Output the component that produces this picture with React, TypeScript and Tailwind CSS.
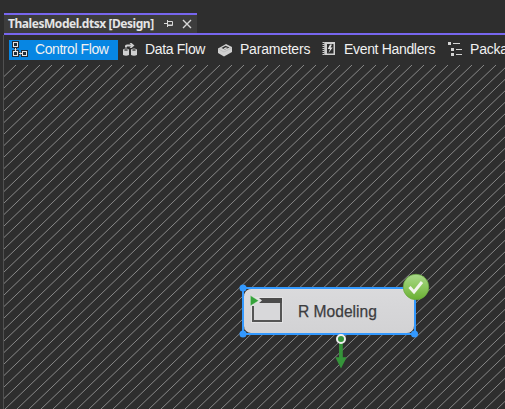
import React from 'react';

function Hatch() {
  const lines: React.ReactNode[] = [];
  for (let i = 0; i < 74; i++) {
    const x = 12 + i * 12;
    const y = 11.5 + i * 11.5;
    lines.push(<line key={i} x1={0} y1={y} x2={x} y2={0} />);
  }
  return (
    <svg className="absolute inset-0" width="501" height="344" stroke="#888888" strokeWidth="1">
      {lines}
    </svg>
  );
}

function ControlFlowIcon() {
  return (
    <svg width="16" height="16" viewBox="0 0 16 16" fill="none">
      <g fill="#1f2c38">
        <rect x="0" y="0" width="7" height="7" />
        <rect x="0" y="9" width="7" height="7" />
        <rect x="9" y="9" width="7" height="7" />
        <path d="M2 6h3v4H2zM6 11h4v3H6z" />
      </g>
      <g stroke="#e4e4e4">
        <rect x="1.5" y="1.5" width="4" height="4" />
        <rect x="1.5" y="10.5" width="4" height="4" />
        <rect x="10.5" y="10.5" width="4" height="4" />
        <path d="M3.5 7v3M2.5 8.5h2M7 12.5h3M8.5 11.5v2" />
      </g>
    </svg>
  );
}

function DataFlowIcon() {
  return (
    <svg width="16" height="16" viewBox="0 0 16 16" fill="#cfcfcf">
      <path d="M3 6.500V5Q3 3.500 5 3.500h4L7.500 2H9.500l3 2.500-3 2.500H7.500L9 5.500H5v1z" />
      <path d="M1 8.500Q4 6.500 7 8.500V14Q4 15.500 1 14zM9 8.500Q12 6.500 15 8.500V14Q12 15.500 9 14z" />
      <ellipse cx="4" cy="9" rx="2" ry=".7" fill="#3a3a3a" />
      <ellipse cx="12" cy="9" rx="2" ry=".7" fill="#3a3a3a" />
    </svg>
  );
}

function ParametersIcon() {
  return (
    <svg width="16" height="16" viewBox="0 0 16 16">
      <path d="M1 7.500l8-4.500 6 3v5l-8 4.500-6-3.500z" fill="#d0d0d0" />
      <path d="M1.500 8L7 11l7.500-4" stroke="#a8a8a8" strokeWidth=".5" fill="none" />
      <path d="M4.500 7l4-2.300 4 1.700L8 8.600z" fill="#2e2e2e" />
      <path d="M6.500 7.500l2.300-1.200 2 .7L8 8.500z" fill="#d0d0d0" />
    </svg>
  );
}

function EventIcon() {
  return (
    <svg width="14" height="14" viewBox="0 0 14 14">
      <path d="M3 0h10v13H3z" fill="#cfcfcf" />
      <path d="M5 2h6.500v9.500H5z" fill="#2e2e2e" />
      <path d="M8 2.500L5.700 7H8l-1.500 4 4.200-5.500H8.500L10 2.500z" fill="#e4e4e4" />
      <path d="M1.500 0v13" stroke="#cfcfcf" strokeWidth="2" strokeDasharray="1 1" />
      <path d="M2.800 0v13" stroke="#cfcfcf" strokeWidth="1" />
    </svg>
  );
}

function PackageIcon() {
  return (
    <svg width="14" height="14" viewBox="0 0 14 14" fill="#d4d4d4" shapeRendering="crispEdges">
      <path d="M0 0h3v3H0zM3 6h3v3H3zM3 11h3v3H3zM5 1h7v1H5zM8 7h6v1H8zM8 12h6v1H8z" />
    </svg>
  );
}

function Tab({ icon, label, className }: { icon: React.ReactNode; label: string; className: string }) {
  return (
    <div className={`flex h-5 shrink-0 items-center ${className}`}>
      <span className="flex w-4 shrink-0 justify-center pb-[2px]">{icon}</span>
      <span className="ml-[7px] whitespace-nowrap pb-px leading-[19px]">{label}</span>
    </div>
  );
}

function TaskNode() {
  return (
    <div className="absolute left-[238px] top-[222px] flex h-[48px] w-[174px] items-center border-2 border-[#3399ff]">
      <div className="flex h-full w-full items-center rounded-[7px] bg-gradient-to-b from-[#dadadc] to-[#d2d2d4] pl-[6px]">
        <svg width="34" height="32" viewBox="0 0 34 32" className="shrink-0">
          <path d="M1 2h32v26H1z" fill="#e2e2e3" />
          <path d="M4 8h26v18H4z" fill="#d8d8da" />
          <path d="M3 11v15h28V7" fill="none" stroke="#555555" strokeWidth="2" />
          <path d="M9 3h23v5H9l3-2.500z" fill="#4b4b4b" />
          <path d="M.3.300v10.700L8.800 5.700z" fill="#35a33b" stroke="#e6ece6" strokeWidth=".5" />
        </svg>
        <span className="ml-[14px] whitespace-nowrap pt-[2px] text-[15.600px] text-[#3d3d3f] [-webkit-text-stroke:0.25px_#3d3d3f]">R Modeling</span>
      </div>
    </div>
  );
}

function NodeAdorners() {
  return (
    <svg className="absolute inset-0" width="501" height="344">
      <defs>
        <linearGradient id="badge" x1="0" y1="0" x2="0" y2="1">
          <stop offset="0" stopColor="#a9d88a" />
          <stop offset=".5" stopColor="#8cc75e" />
          <stop offset="1" stopColor="#69ae32" />
        </linearGradient>
      </defs>
      <g fill="#3399ff">
        <circle cx="239" cy="223" r="3.500" />
        <circle cx="239" cy="269" r="3.500" />
        <circle cx="410.500" cy="269" r="3.500" />
      </g>
      <path d="M336.900 276v17" stroke="#35943a" strokeWidth="3.800" />
      <path d="M331.300 292.300h11.400L337 303.500z" fill="#35943a" />
      <circle cx="337" cy="274" r="4" fill="#35943a" stroke="#eeeeee" strokeWidth="2" />
      <circle cx="412" cy="222" r="12.800" fill="url(#badge)" stroke="#69a741" strokeWidth=".7" />
      <path d="M405.500 222l4.500 5 8-10" fill="none" stroke="#f1f4ed" strokeWidth="3" />
    </svg>
  );
}

export default function App() {
  return (
    <div className="flex h-[409px] w-[505px] flex-col overflow-hidden bg-[#2e2e2e] pt-[13px] font-['Liberation_Sans',Arial,sans-serif] text-[#f1f1f1]">
      <div className="ml-1 flex h-5 w-[193px] shrink-0 items-center border-t-2 border-[#7766ee] bg-[#3d3d3d] pl-1 font-['Noto_Sans','Open_Sans',sans-serif]">
        <span className="w-[146px] whitespace-nowrap text-[12px] font-bold tracking-[-0.450px] text-[#e5e5e5]">ThalesModel.dtsx [Design]</span>
        <svg className="ml-[10px] shrink-0" width="9" height="8" viewBox="0 0 9 8" fill="none" stroke="#d8d8d8">
          <path d="M0 3.500h3M3.500 0v7M4 1.500h4.500v4H4M4 5h4" />
        </svg>
        <svg className="ml-[9px] shrink-0" width="10" height="10" viewBox="0 0 10 10" stroke="#d8d8d8" strokeWidth="1.400">
          <path d="M1 1l8 8M9 1L1 9" />
        </svg>
      </div>
      <div className="ml-1 h-[2px] shrink-0 bg-[#7766ee]" />
      <div className="ml-[3px] flex min-h-0 flex-1 flex-col border-l border-[#505050]">
        <div className="flex h-[30px] shrink-0 items-start overflow-hidden pt-[5px] text-[14px]">
          <Tab className="ml-[5px] w-[109px] bg-[#0786e3] pl-[3px] tracking-[-0.430px]" icon={<ControlFlowIcon />} label="Control Flow" />
          <Tab className="w-[95px] pl-1 tracking-[-0.320px]" icon={<DataFlowIcon />} label="Data Flow" />
          <Tab className="w-[104px] pl-1 tracking-[-0.220px]" icon={<ParametersIcon />} label="Parameters" />
          <Tab className="w-[126px] pl-1 tracking-[-0.330px]" icon={<EventIcon />} label="Event Handlers" />
          <Tab className="pl-1 tracking-[-0.200px]" icon={<PackageIcon />} label="Package Explorer" />
        </div>
        <div className="relative min-h-0 flex-1 overflow-hidden">
          <Hatch />
          <TaskNode />
          <NodeAdorners />
        </div>
      </div>
    </div>
  );
}
